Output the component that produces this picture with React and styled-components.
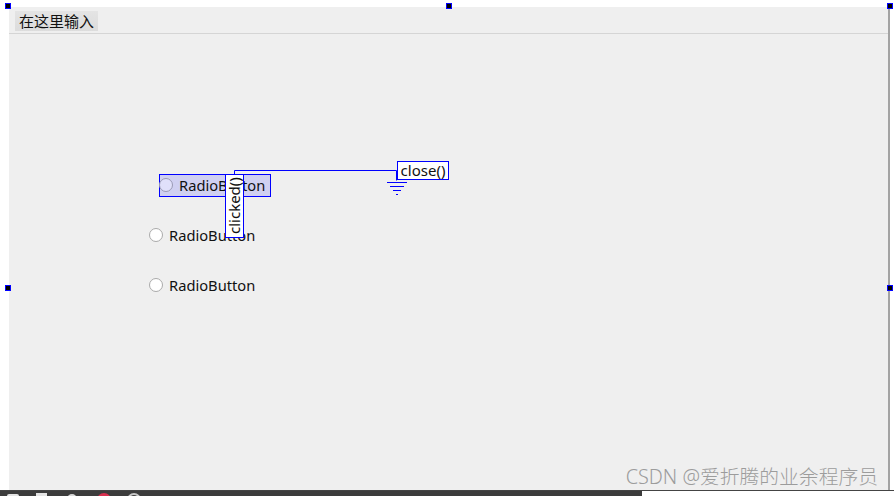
import React from 'react'
import styled, {createGlobalStyle} from 'styled-components'

const GlobalStyle = createGlobalStyle`
    html, body {
        margin: 0;
        padding: 0;
        width: 894px;
        height: 496px;
        overflow: hidden;
        background: #fff;
    }
    #root {
        height: 100%;
    }
`

const Page = styled.div`
    position: relative;
    width: 894px;
    height: 496px;
    display: flex;
    flex-direction: column;
    font-family: "Noto Sans", "Noto Sans CJK SC", sans-serif;
    color: #111;
`

const FormArea = styled.div`
    flex: 1;
    min-height: 0;
    padding: 7px 0 0 9px;
    display: flex;
`

const Form = styled.div`
    position: relative;
    width: 879px;
    background: #efefef;
    border-right: 2px solid #a3a3a3;
    box-sizing: content-box;
`

const MenuBar = styled.div`
    height: 27px;
    box-sizing: border-box;
    border-bottom: 1px solid #d5d5d5;
    padding: 4px 0 0 6px;
`

const MenuItem = styled.div`
    width: 83px;
    height: 20px;
    box-sizing: border-box;
    padding-left: 4px;
    background: linear-gradient(#e4e4e4, #dcdcdc);
    font-size: 15px;
    line-height: 20px;
    white-space: nowrap;
`

const RadioRow = styled.div`
    position: absolute;
    left: ${p => p.$x}px;
    top: ${p => p.$y}px;
    display: flex;
    align-items: center;
    gap: 6px;
    height: 22px;
    font-size: 14.7px;
    white-space: nowrap;
`

const RadioDot = styled.span`
    width: 14px;
    height: 14px;
    box-sizing: border-box;
    border-radius: 50%;
    border: 1px solid ${p => p.$active ? '#9a9ab4' : '#aaa'};
    background: ${p => p.$active ? '#e0e0fa' : '#fff'};
`

const Selection = styled.div`
    position: absolute;
    left: 150px;
    top: 167px;
    width: 112px;
    height: 23px;
    box-sizing: border-box;
    border: 1px solid #0000ff;
    background: rgba(0, 0, 255, 0.13);
`

const SlotBox = styled.div`
    position: absolute;
    left: 216px;
    top: 167px;
    width: 19px;
    height: 64px;
    box-sizing: border-box;
    border: 1px solid #0000ff;
    background: #fff;
    font-size: 15px;
    line-height: 17px;
    writing-mode: vertical-rl;
    transform: rotate(180deg);
    text-align: center;
    white-space: nowrap;
`

const CloseBox = styled.div`
    position: absolute;
    left: 388px;
    top: 154px;
    width: 52px;
    height: 19px;
    box-sizing: border-box;
    border: 1px solid #0000ff;
    background: #fff;
    font-size: 15px;
    line-height: 17px;
    text-align: center;
    white-space: nowrap;
`

const Wire = styled.svg`
    position: absolute;
    left: 220px;
    top: 158px;
    overflow: visible;
`

const Handle = styled.span`
    position: absolute;
    left: ${p => p.$x}px;
    top: ${p => p.$y}px;
    width: 6px;
    height: 6px;
    box-sizing: border-box;
    border: 1px solid #0000ff;
    background: #000;
`

const Watermark = styled.div`
    position: absolute;
    right: 10px;
    bottom: 1px;
    font-size: 19.8px;
    font-weight: 300;
    line-height: 24px;
    color: #9c9c9c;
    white-space: nowrap;
`

const BottomEdge = styled.div`
    height: 6px;
    display: flex;
    align-items: flex-start;
    border-top: 1px solid #444;
    box-sizing: border-box;
`

const Taskbar = styled.div`
    width: 642px;
    height: 5px;
    background: #3c3c3c;
    overflow: hidden;
`

const Tray = styled.svg`
    display: block;
`

const handles = [
    [-4, -4], [437, -4], [878, -4],
    [-4, 278], [878, 278],
]

const App = () => {
    return (
        <Page>
            <GlobalStyle />
            <FormArea>
                <Form>
                    <MenuBar>
                        <MenuItem>在这里输入</MenuItem>
                    </MenuBar>

                    <Selection />
                    <RadioRow $x={150} $y={167}><RadioDot $active />RadioButton</RadioRow>
                    <RadioRow $x={140} $y={217}><RadioDot />RadioButton</RadioRow>
                    <RadioRow $x={140} $y={267}><RadioDot />RadioButton</RadioRow>

                    <Wire width="200" height="40">
                        <path d="M5.5 9V5.5H167.5V15.5" fill="none" stroke="#00f" />
                        <path d="M158 17.5h20M161 21.5h14M164 25.5h8M167 29.5h2" fill="none" stroke="#00f" />
                    </Wire>
                    <SlotBox>clicked()</SlotBox>
                    <CloseBox>close()</CloseBox>

                    {handles.map(([x, y], i) => <Handle $x={x} $y={y} key={i} />)}
                    <Watermark>CSDN @爱折腾的业余程序员</Watermark>
                </Form>
            </FormArea>
            <BottomEdge>
                <Taskbar>
                    <Tray width="642" height="5">
                        <rect x="7" y="3" width="12" height="5" rx="2" fill="#e4e4e4" />
                        <rect x="36" y="2" width="11" height="5" fill="#e4e4e4" />
                        <circle cx="72" cy="8" r="5" fill="#d8d8d8" />
                        <circle cx="104" cy="9" r="7" fill="#d9304f" />
                        <circle cx="134" cy="9" r="6" fill="none" stroke="#c8c8c8" strokeWidth="2" />
                    </Tray>
                </Taskbar>
            </BottomEdge>
        </Page>
    )
}

export default App
